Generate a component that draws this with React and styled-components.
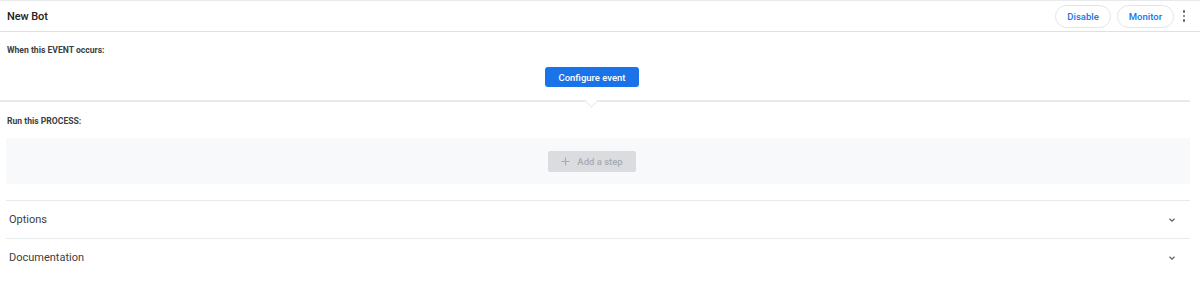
import React from "react";
import styled, { createGlobalStyle } from "styled-components";

const Global = createGlobalStyle`
  html, body { margin: 0; padding: 0; background: #fff; }
  body { font-family: Roboto, "Noto Sans", Arial, sans-serif; color: #3c4043; }
  * { box-sizing: border-box; }
`;

const Page = styled.div`
  width: 1200px;
  height: 288px;
  border-top: 1px solid #e8eaed;
  display: flex;
  flex-direction: column;
`;

const Header = styled.div`
  height: 31px;
  border-bottom: 1px solid #e0e0e0;
  display: flex;
  align-items: center;
  justify-content: space-between;
  padding: 0 9px 0 7px;
`;

const Title = styled.div`
  font-size: 11px;
  font-weight: 500;
  color: #202124;
  letter-spacing: -0.1px;
`;

const Actions = styled.div`
  display: flex;
  align-items: center;
  gap: 6px;
`;

const PillButton = styled.button`
  height: 23px;
  padding: 0 11px;
  border-radius: 12px;
  border: 1px solid #e3e5e8;
  background: #fff;
  color: #1a73e8;
  font-family: inherit;
  font-size: 9.5px;
  font-weight: 500;
  cursor: pointer;
`;

const Kebab = styled.div`
  width: 14px;
  height: 23px;
  display: flex;
  flex-direction: column;
  align-items: center;
  justify-content: center;
  gap: 2px;
  margin-left: -3px;
  span {
    width: 2.5px;
    height: 2.5px;
    border-radius: 50%;
    background: #5f6368;
  }
`;

const SectionLabel = styled.div`
  font-size: 8.6px;
  font-weight: 700;
  color: #3c4043;
  padding: ${(p) => p.$pad};
`;

const Center = styled.div`
  display: flex;
  justify-content: center;
  padding: ${(p) => p.$pad || "0"};
`;

const PrimaryButton = styled.button`
  height: 20px;
  padding: 0 13px;
  border: none;
  border-radius: 3px;
  background: #1a73e8;
  color: #fff;
  font-family: inherit;
  font-size: 9.5px;
  font-weight: 500;
`;

const NotchDivider = styled.div`
  position: relative;
  width: 1190px;
  height: 2px;
  background: #e8eaed;
  margin-top: 13px;
  &::after {
    content: "";
    position: absolute;
    left: 587px;
    top: 1px;
    width: 8px;
    height: 8px;
    background: #fff;
    border-right: 1.5px solid #e8eaed;
    border-bottom: 1.5px solid #e8eaed;
    transform: translateY(-4px) rotate(45deg);
  }
`;

const StepArea = styled.div`
  margin: 0 10px 0 6px;
  height: 46px;
  background: #f8f9fa;
  display: flex;
  align-items: center;
  justify-content: center;
`;

const DisabledButton = styled.button`
  height: 21px;
  width: 88px;
  margin-right: 12px;
  border: none;
  border-radius: 2px;
  background: #dadce0;
  color: #a8abb0;
  font-family: inherit;
  font-size: 9.5px;
  font-weight: 500;
  display: flex;
  align-items: center;
  justify-content: center;
  gap: 7px;
`;

const Accordion = styled.div`
  margin: 16px 10px 0 6px;
`;

const AccRow = styled.div`
  height: 38px;
  border-top: 1px solid #e8eaed;
  display: flex;
  align-items: center;
  justify-content: space-between;
  padding: 0 14px 0 3px;
  font-size: 11px;
  color: #3c4043;
`;

const Chevron = () => (
  <svg width="8" height="8" viewBox="0 0 8 8">
    <path d="M1.5 2.8 L4 5.2 L6.5 2.8" fill="none" stroke="#5f6368" strokeWidth="1.3" />
  </svg>
);

const Plus = () => (
  <svg width="9" height="9" viewBox="0 0 9 9">
    <path d="M4.5 0.5 V8.5 M0.5 4.5 H8.5" stroke="#a8abb0" strokeWidth="1.1" />
  </svg>
);

export default function App() {
  return (
    <>
      <Global />
      <Page>
        <Header>
          <Title>New Bot</Title>
          <Actions>
            <PillButton>Disable</PillButton>
            <PillButton>Monitor</PillButton>
            <Kebab>
              <span />
              <span />
              <span />
            </Kebab>
          </Actions>
        </Header>
        <SectionLabel $pad="13px 7px 0">When this EVENT occurs:</SectionLabel>
        <Center $pad="12px 16px 0 0">
          <PrimaryButton>Configure event</PrimaryButton>
        </Center>
        <NotchDivider />
        <SectionLabel $pad="14px 7px 12px">Run this PROCESS:</SectionLabel>
        <StepArea>
          <DisabledButton>
            <Plus />
            Add a step
          </DisabledButton>
        </StepArea>
        <Accordion>
          <AccRow>
            Options
            <Chevron />
          </AccRow>
          <AccRow>
            Documentation
            <Chevron />
          </AccRow>
        </Accordion>
      </Page>
    </>
  );
}
